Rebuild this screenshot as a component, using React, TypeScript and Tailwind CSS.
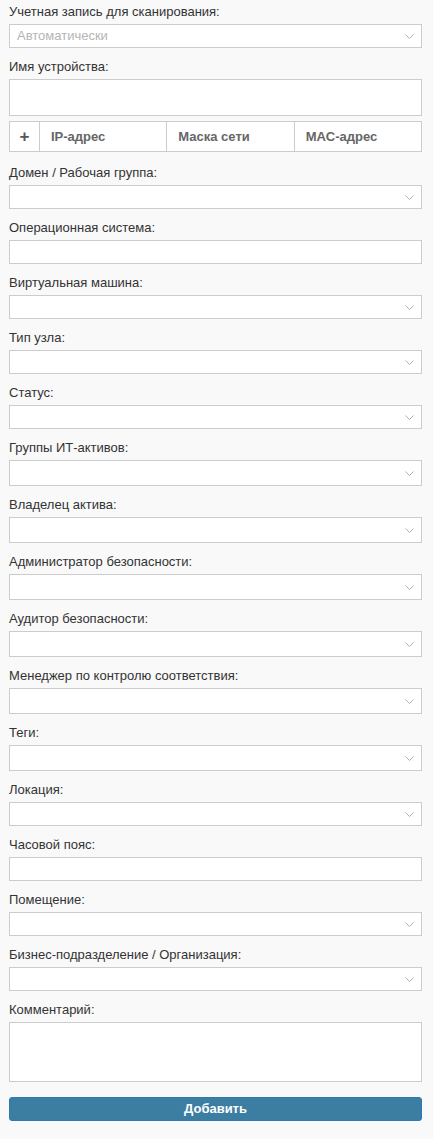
import React from "react";

type Kind = "select" | "multi" | "input" | "tall" | "textarea";

interface Field {
  label: string;
  kind: Kind;
  placeholder?: string;
}

const fieldsTop: Field[] = [
  { label: "Учетная запись для сканирования:", kind: "select", placeholder: "Автоматически" },
];

const fieldsBottom: Field[] = [
  { label: "Домен / Рабочая группа:", kind: "select" },
  { label: "Операционная система:", kind: "input" },
  { label: "Виртуальная машина:", kind: "select" },
  { label: "Тип узла:", kind: "select" },
  { label: "Статус:", kind: "select" },
  { label: "Группы ИТ-активов:", kind: "multi" },
  { label: "Владелец актива:", kind: "multi" },
  { label: "Администратор безопасности:", kind: "multi" },
  { label: "Аудитор безопасности:", kind: "multi" },
  { label: "Менеджер по контролю соответствия:", kind: "multi" },
  { label: "Теги:", kind: "multi" },
  { label: "Локация:", kind: "select" },
  { label: "Часовой пояс:", kind: "input" },
  { label: "Помещение:", kind: "select" },
  { label: "Бизнес-подразделение / Организация:", kind: "select" },
];

const Chevron = () => (
  <svg width="9" height="5" viewBox="0 0 9 5" className="shrink-0">
    <path d="M0.5 0.5 L4.5 4.5 L8.5 0.5" stroke="#b0b0b0" strokeWidth="1" fill="none" />
  </svg>
);

const Control: React.FC<{ field: Field }> = ({ field }) => {
  if (field.kind === "select" || field.kind === "multi") {
    return (
      <div
        className={
          "flex items-center justify-between border border-[#cccccc] bg-white pl-[7px] pr-[7px] " +
          (field.kind === "multi" ? "h-[26px]" : "h-[24px]")
        }
      >
        <span className="text-[13px] text-[#b5b5b5]">{field.placeholder}</span>
        <Chevron />
      </div>
    );
  }
  if (field.kind === "textarea") {
    return <div className="h-[60px] border border-[#cccccc] bg-white" />;
  }
  if (field.kind === "tall") {
    return <div className="h-[37px] border border-[#cccccc] bg-white" />;
  }
  return <div className="h-[24px] border border-[#cccccc] bg-white" />;
};

const Group: React.FC<{ field: Field; last?: boolean }> = ({ field, last }) => (
  <div className={last ? "" : "mb-[10px]"}>
    <div className="mb-[4px] h-[17px] text-[13px] leading-[17px] text-[#333333]">{field.label}</div>
    <Control field={field} />
  </div>
);

const NetTable = () => (
  <div className="mt-[5px] mb-[12px] flex h-[31px] border border-[#cccccc] bg-white text-[13px] font-bold text-[#666666]">
    <div className="flex w-[30px] items-center justify-center border-r border-[#cccccc] text-[17px] text-[#555555]">
      +
    </div>
    <div className="flex flex-1 items-center border-r border-[#cccccc] pl-[11px]">IP-адрес</div>
    <div className="flex flex-1 items-center border-r border-[#cccccc] pl-[11px]">Маска сети</div>
    <div className="flex flex-1 items-center pl-[11px]">MAC-адрес</div>
  </div>
);

export default function App() {
  return (
    <div
      className="min-h-[1139px] bg-[#f9f9f9] pt-[3px] pb-[17px] pl-[9px] pr-[11px]"
      style={{ fontFamily: '"Liberation Sans", Arial, sans-serif' }}
    >
      {fieldsTop.map((f) => (
        <Group key={f.label} field={f} />
      ))}
      <div>
        <div className="mb-[4px] h-[17px] text-[13px] leading-[17px] text-[#333333]">Имя устройства:</div>
        <Control field={{ label: "", kind: "tall" }} />
      </div>
      <NetTable />
      {fieldsBottom.map((f) => (
        <Group key={f.label} field={f} />
      ))}
      <Group field={{ label: "Комментарий:", kind: "textarea" }} last />
      <button className="mt-[15px] flex h-[24px] w-full items-center justify-center rounded-[3px] border border-[#2f78b5] bg-[#3b7ea1] text-[13px] font-bold text-white">
        Добавить
      </button>
    </div>
  );
}
